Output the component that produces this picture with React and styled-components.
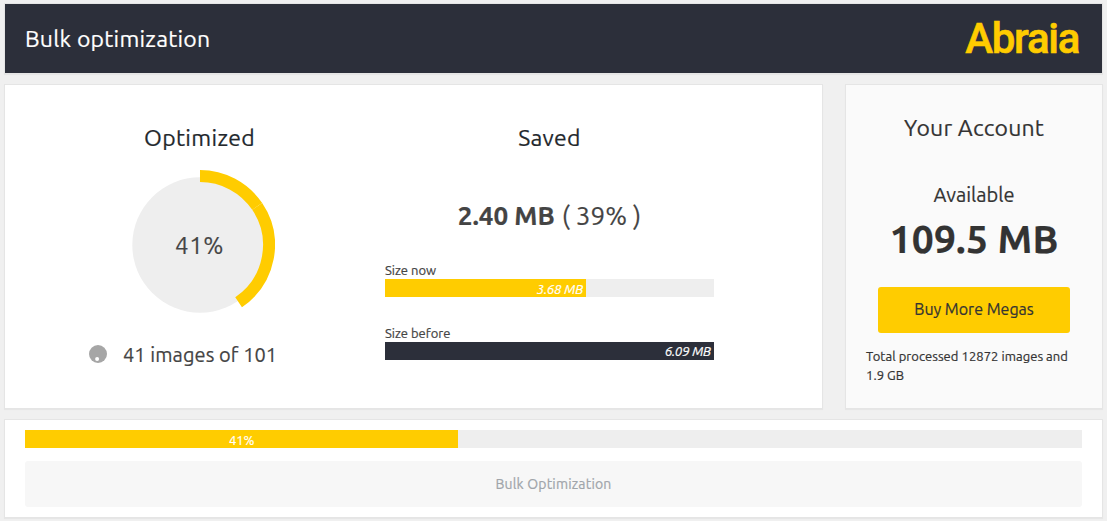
import React from "react";
import styled, { createGlobalStyle } from "styled-components";

const GlobalStyle = createGlobalStyle`
  * { box-sizing: border-box; }
  body {
    margin: 0;
    background: #f0f0f0;
    color: #444;
    font-family: Ubuntu, "Noto Sans", "Open Sans", sans-serif;
    font-size: 13px;
    -webkit-text-stroke: 0.2px;
  }
`;

const Page = styled.main`
  display: flex;
  flex-direction: column;
  gap: 10px;
  width: 1107px;
  height: 521px;
  padding: 3px 4px;
  overflow: hidden;
`;

const Panel = styled.section`
  background: ${(p) => p.$bg || "#fff"};
  border: 1px solid #e5e5e5;
  box-shadow: 0 1px 1px rgba(0, 0, 0, 0.04);
`;

const Header = styled(Panel)`
  display: flex;
  align-items: center;
  justify-content: space-between;
  height: 71px;
  padding: 0 23px 0 20px;
`;

const Text = styled.span`
  display: block;
  margin: 0;
  white-space: nowrap;
  font-size: ${(p) => p.$size}px;
  line-height: ${(p) => p.$line}px;
  letter-spacing: ${(p) => p.$track || 0}px;
  color: ${(p) => p.$color || "inherit"};
  font-weight: ${(p) => (p.$bold ? 700 : 400)};
`;

const Logo = styled.div`
  padding-top: 1px;
  color: #fc0;
  font-family: Roboto, "Liberation Sans", sans-serif;
  font-size: 42px;
  font-weight: 500;
  line-height: 60px;
  letter-spacing: -1.3px;
  white-space: nowrap;
  -webkit-text-stroke: 0.6px #fc0;
`;

const Columns = styled.div`
  display: grid;
  grid-template-columns: 819px 258px;
  justify-content: space-between;
  height: 325px;
`;

const Stats = styled(Panel)`
  display: grid;
  grid-template-columns: 348px 329px;
  column-gap: 32px;
  padding-top: 38px;
`;

const Stat = styled.div`
  display: flex;
  flex-direction: column;
  align-items: center;
`;

const OptimizedStat = styled(Stat)`
  padding-left: 41px;
`;

const Chart = styled.div`
  display: grid;
  place-items: center;
  width: 150px;
  height: 150px;
  margin: 17px 0 20px;
  > * { grid-area: 1 / 1; }
`;

const Percent = styled(Text)`
  padding-top: 2px;
`;

const Status = styled.div`
  display: flex;
  align-items: center;
  gap: 16px;
  width: 225px;
  padding-left: 2px;
  svg { margin-bottom: 2px; }
`;

const SavedValue = styled.div`
  display: flex;
  gap: 7px;
  margin: 46px 0 28px;
`;

const Meter = styled.div`
  width: 100%;
  margin-bottom: 27px;
`;

const Label = styled.div`
  height: 18px;
  line-height: 18px;
`;

const Track = styled.div`
  height: 18px;
  background: #eee;
`;

const Fill = styled.div`
  height: 18px;
  padding-right: ${(p) => (p.$center ? 0 : 3)}px;
  background: ${(p) => p.$color};
  color: #fff;
  line-height: ${(p) => p.$line || 20}px;
  letter-spacing: ${(p) => (p.$center ? 0 : -0.15)}px;
  font-style: ${(p) => (p.$center ? "normal" : "italic")};
  text-align: ${(p) => (p.$center ? "center" : "right")};
`;

const Account = styled(Panel)`
  display: flex;
  flex-direction: column;
  align-items: center;
  padding: 28px 20px 0;
  color: #333;
`;

const Available = styled.div`
  display: flex;
  flex-direction: column;
  align-items: center;
  gap: 2px;
  margin: 37px 0 21px;
`;

const Button = styled.button`
  width: ${(p) => p.$width};
  height: 46px;
  padding: 0 0 ${(p) => p.$lift || 0}px;
  border: 0;
  border-radius: 3px;
  background: ${(p) => p.$bg};
  color: ${(p) => p.$color};
  font-family: inherit;
  font-size: ${(p) => p.$size}px;
  letter-spacing: ${(p) => p.$track || 0}px;
`;

const Summary = styled.p`
  width: 100%;
  margin: 14px 0 0;
  line-height: 19px;
  letter-spacing: 0.05px;
  white-space: nowrap;
`;

const Progress = styled(Panel)`
  display: flex;
  flex-direction: column;
  gap: 13px;
  height: 99px;
  padding: 10px 20px;
`;

function Donut() {
  return (
    <svg width="150" height="150" viewBox="0 0 150 150">
      <circle cx="75" cy="75" r="67.7" fill="#eee" />
      <path d="M75 6 A69 69 0 0 1 132.2 36.42" fill="none" stroke="#fc0" strokeWidth="12" />
      <path d="M132.2 36.42 A69 69 0 0 1 113.6 132.2" fill="none" stroke="#fc0" strokeWidth="12" />
    </svg>
  );
}

function Spinner() {
  return (
    <svg width="18" height="18" viewBox="0 0 18 18">
      <circle cx="9" cy="9" r="9" fill="#a6a6a6" />
      <circle cx="8.1" cy="14" r="2" fill="#fff" />
    </svg>
  );
}

export default function App() {
  return (
    <>
      <GlobalStyle />
      <Page>
        <Header $bg="#2c2f3a">
          <Text as="h1" $size={23} $line={30} $track={0.25} $color="#fff">Bulk optimization</Text>
          <Logo>Abraia</Logo>
        </Header>

        <Columns>
          <Stats>
            <OptimizedStat>
              <Text $size={23} $line={30} $track={0.35} $color="#23282d">Optimized</Text>
              <Chart>
                <Donut />
                <Percent $size={24} $line={30} $track={0.5}>41%</Percent>
              </Chart>
              <Status>
                <Spinner />
                <Text $size={20} $line={30} $track={0.07}>41 images of 101</Text>
              </Status>
            </OptimizedStat>
            <Stat>
              <Text $size={23} $line={30} $track={0.3} $color="#23282d">Saved</Text>
              <SavedValue>
                <Text $size={26} $line={34} $bold>2.40 MB</Text>
                <Text $size={26} $line={34}>( 39% )</Text>
              </SavedValue>
              <Meter>
                <Label>Size now</Label>
                <Track><Fill $color="#fc0" style={{ width: "61.1%" }}>3.68 MB</Fill></Track>
              </Meter>
              <Meter>
                <Label>Size before</Label>
                <Track><Fill $color="#2c2f3a" $line={18} style={{ width: "100%" }}>6.09 MB</Fill></Track>
              </Meter>
            </Stat>
          </Stats>

          <Account $bg="#fafafa">
            <Text $size={23} $line={30} $track={0.18}>Your Account</Text>
            <Available>
              <Text $size={20} $line={30}>Available</Text>
              <Text $size={39} $line={54} $track={0.2} $bold>109.5 MB</Text>
            </Available>
            <Button $width="192px" $bg="#fc0" $color="#333" $size={16} $lift={2}>Buy More Megas</Button>
            <Summary>Total processed 12872 images and<br />1.9 GB</Summary>
          </Account>
        </Columns>

        <Progress>
          <Track><Fill $color="#fc0" $center style={{ width: "41%" }}>41%</Fill></Track>
          <Button $width="100%" $bg="#f7f7f7" $color="#a0a5aa" $size={14} $track={0.18}>Bulk Optimization</Button>
        </Progress>
      </Page>
    </>
  );
}
